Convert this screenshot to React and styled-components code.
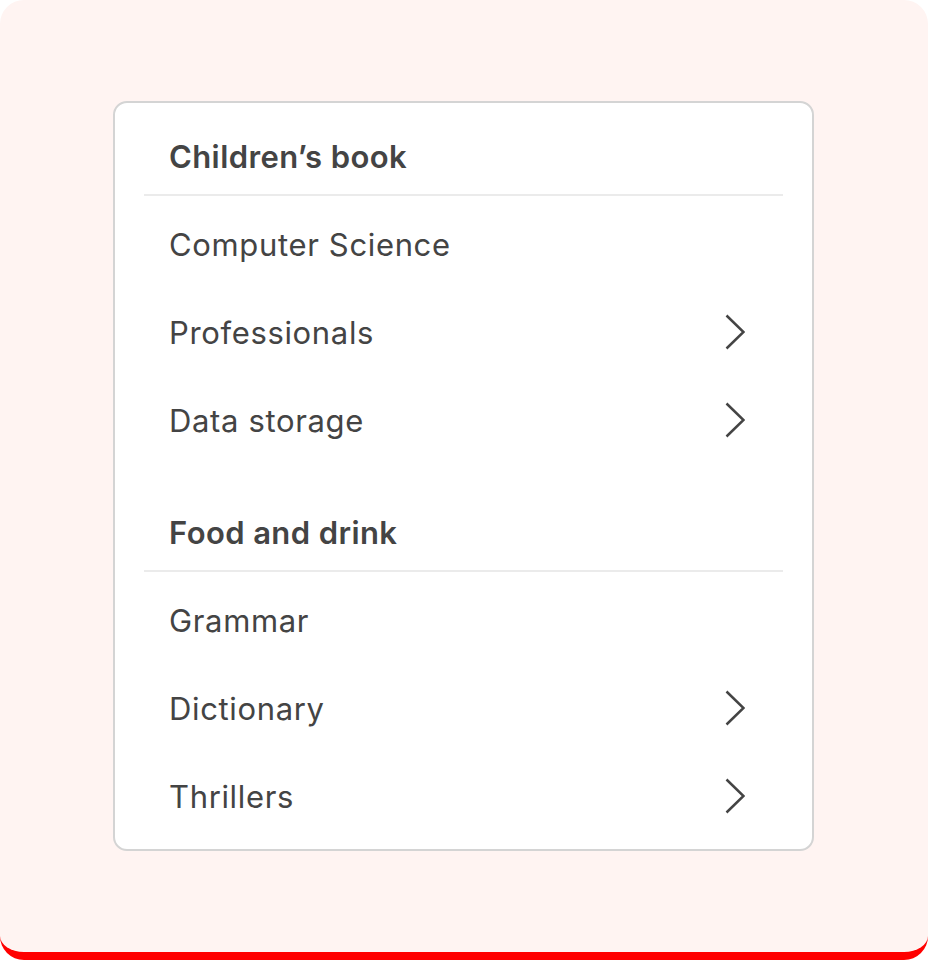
import React from "react";
import styled, { createGlobalStyle } from "styled-components";

const GlobalStyle = createGlobalStyle`
  * {
    box-sizing: border-box;
  }
  body {
    margin: 0;
    background: #ffffff;
    font-family: Inter, "Noto Sans", sans-serif;
  }
`;

const Frame = styled.div`
  width: 928px;
  height: 960px;
  background: #fff4f2;
  border-radius: 24px;
  border-bottom: 8px solid #ff0000;
  padding-right: 1px;
  display: flex;
  align-items: center;
  justify-content: center;
`;

const Card = styled.div`
  width: 701px;
  background: #ffffff;
  border: 2px solid #d4d4d4;
  border-radius: 14px;
  padding: 0 29px 8px;
  display: flex;
  flex-direction: column;
  gap: 14px;
`;

const Group = styled.div`
  display: flex;
  flex-direction: column;
`;

const GroupTitle = styled.div`
  height: 93px;
  padding: 36px 25px 0;
  border-bottom: 2px solid #ebebeb;
  font-size: 31px;
  line-height: 36px;
  letter-spacing: 0.4px;
  font-weight: 600;
  color: #444444;
`;

const ItemList = styled.div`
  padding-top: 5px;
  display: flex;
  flex-direction: column;
`;

const Item = styled.div`
  height: 88px;
  padding: 0 38px 2px 25px;
  display: flex;
  align-items: center;
  justify-content: space-between;
  font-size: 31px;
  letter-spacing: 0.65px;
  color: #444444;
`;

const Chevron = () => (
  <svg width="20" height="36" viewBox="0 0 20 36" fill="none">
    <path d="M1.5 1.5 L18.5 18 L1.5 34.5" stroke="#444444" strokeWidth="2.5" />
  </svg>
);

const groups = [
  {
    title: "Children’s book",
    items: [
      { label: "Computer Science", more: false },
      { label: "Professionals", more: true },
      { label: "Data storage", more: true },
    ],
  },
  {
    title: "Food and drink",
    items: [
      { label: "Grammar", more: false },
      { label: "Dictionary", more: true },
      { label: "Thrillers", more: true },
    ],
  },
];

const App = () => {
  return (
    <>
      <GlobalStyle />
      <Frame>
        <Card>
          {groups.map((group) => (
            <Group key={group.title}>
              <GroupTitle>{group.title}</GroupTitle>
              <ItemList>
                {group.items.map((item) => (
                  <Item key={item.label}>
                    {item.label}
                    {item.more ? <Chevron /> : null}
                  </Item>
                ))}
              </ItemList>
            </Group>
          ))}
        </Card>
      </Frame>
    </>
  );
};

export default App;
